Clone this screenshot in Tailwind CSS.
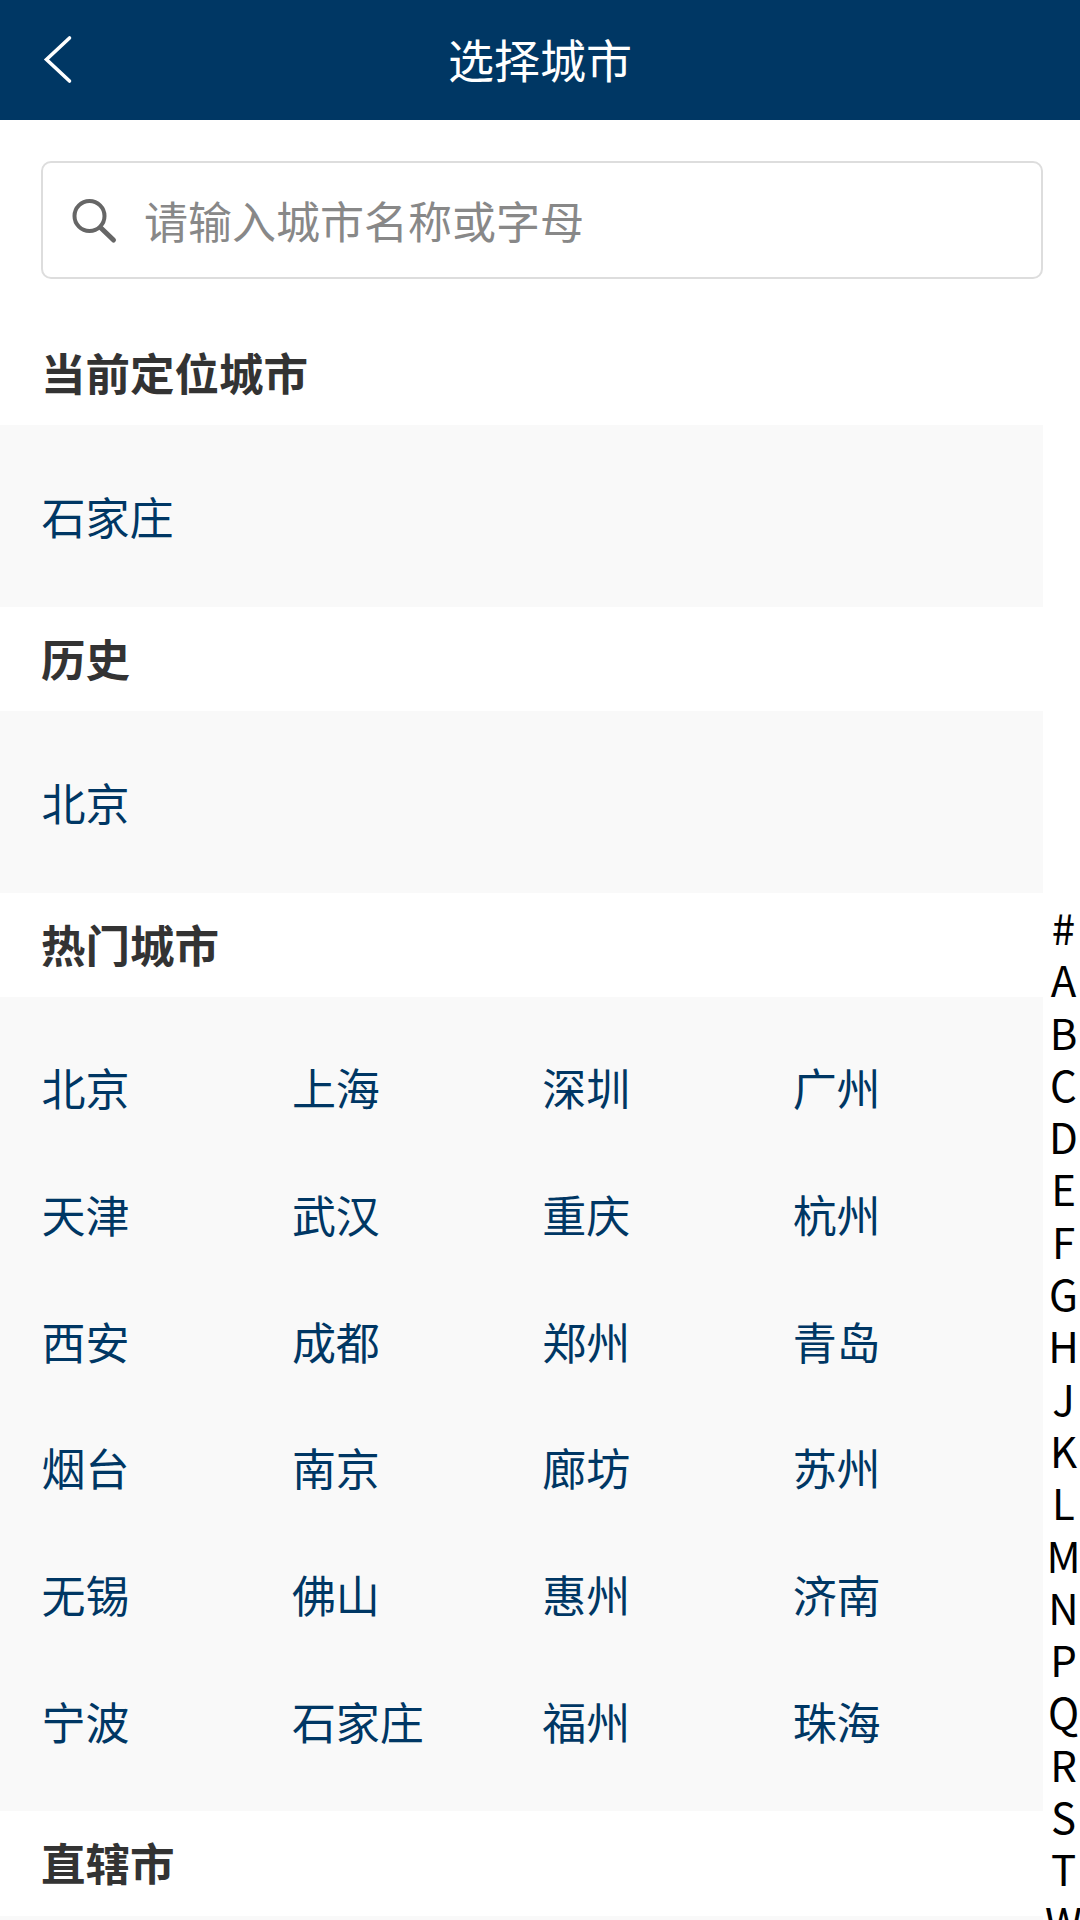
<!DOCTYPE html>
<html lang="zh-CN">

<head>
    <meta charset="UTF-8">
    <meta name="viewport" content="width=device-width, initial-scale=1.0">
    <title>选择城市</title>
    <script src="https://cdn.jsdelivr.net/npm/@tailwindcss/browser@4"></script>
</head>

<body class="bg-white font-['Noto_Sans_CJK_SC',sans-serif]">
    <div class="relative w-[1080px] h-[1920px] overflow-hidden">
        <!-- header -->
        <header class="relative h-[120px] bg-[#003764] flex items-center justify-center text-white text-[46px]">
            <svg class="absolute left-[40px] top-[32px]" width="36" height="56" viewBox="0 0 36 56" fill="none">
                <polyline points="29.5,6 6.5,27.5 29.5,49" stroke="#fff" stroke-width="3.6" stroke-linecap="round" stroke-linejoin="miter" />
            </svg>
            <h1 class="font-normal pb-[3px]">选择城市</h1>
        </header>

        <div class="w-[1043px]">
            <!-- search -->
            <div class="pl-[41px] pt-[41px] pb-[44px]">
                <div class="h-[118px] border-2 border-[#dddddd] rounded-[10px] flex items-center pl-[29px]">
                    <svg width="48" height="48" viewBox="0 0 48 48" fill="none">
                        <circle cx="17.5" cy="20" r="15" stroke="#666666" stroke-width="4" />
                        <line x1="29" y1="32" x2="41.5" y2="44" stroke="#666666" stroke-width="5" stroke-linecap="round" />
                    </svg>
                    <span class="ml-[24px] text-[44px] text-[#888888]">请输入城市名称或字母</span>
                </div>
            </div>

            <!-- current -->
            <h2 class="h-[102px] flex items-center pl-[41px] pb-[4px] text-[44.5px] font-bold text-[#333333]">当前定位城市</h2>
            <div class="h-[182px] bg-[#f9f9f9] pl-[41.5px] flex items-center text-[44px] text-[#003764]">石家庄</div>

            <!-- history -->
            <h2 class="h-[104px] flex items-center pl-[41px] pb-[2px] text-[44.5px] font-bold text-[#333333]">历史</h2>
            <div class="h-[182px] bg-[#f9f9f9] pl-[41.5px] flex items-center text-[44px] text-[#003764]">北京</div>

            <!-- hot -->
            <h2 class="h-[104px] flex items-center pl-[41px] pb-[2px] text-[44.5px] font-bold text-[#333333]">热门城市</h2>
            <div class="h-[814px] bg-[#f9f9f9] pl-[41.5px] py-[27px] grid grid-cols-4 auto-rows-[126.7px] items-center text-[44px] text-[#003764]">
                <span>北京</span><span>上海</span><span>深圳</span><span>广州</span>
                <span>天津</span><span>武汉</span><span>重庆</span><span>杭州</span>
                <span>西安</span><span>成都</span><span>郑州</span><span>青岛</span>
                <span>烟台</span><span>南京</span><span>廊坊</span><span>苏州</span>
                <span>无锡</span><span>佛山</span><span>惠州</span><span>济南</span>
                <span>宁波</span><span>石家庄</span><span>福州</span><span>珠海</span>
            </div>

            <h2 class="h-[105px] flex items-center pl-[41px] pb-[3px] text-[44.5px] font-bold text-[#333333]">直辖市</h2>
            <div class="h-[182px] bg-[#f9f9f9]"></div>
        </div>

        <!-- letter index -->
        <nav class="absolute right-0 top-[901px] w-[33px] flex flex-col items-center text-[42px] leading-[52.3px] text-black">
            <span>#</span><span>A</span><span>B</span><span>C</span><span>D</span><span>E</span><span>F</span>
            <span>G</span><span>H</span><span>J</span><span>K</span><span>L</span><span>M</span><span>N</span>
            <span>P</span><span>Q</span><span>R</span><span>S</span><span>T</span><span>W</span>
        </nav>
    </div>
</body>

</html>
